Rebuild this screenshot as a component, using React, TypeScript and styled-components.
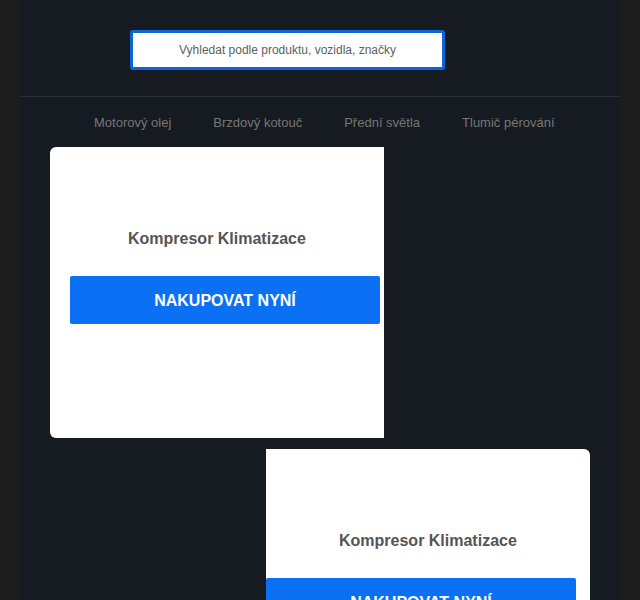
import styled, { createGlobalStyle } from "styled-components"

const Global = createGlobalStyle`
    body{
        margin: 0;
        background-color: #1c1c1d;
        font-family: "Liberation Sans", Arial, sans-serif;
    }
`

const Pagina = styled.div`
    width: 600px;
    min-height: 600px;
    margin: 0 auto;
    background-color: #151b20;
    padding-bottom: 20px;
`
const Cabecalho = styled.header`
    padding: 30px 0 26px 110px;
    border-bottom: 1px solid #272f34;
`
const Busca = styled.input`
    box-sizing: border-box;
    display: block;
    width: 315px;
    height: 40px;
    border: 3px solid #0b67d8;
    border-radius: 3px;
    background: #fff;
    font-family: "Liberation Sans", Arial, sans-serif;
    font-size: 12px;
    text-align: center;
    outline: none;
    &::placeholder{
        color: #5e5e5e;
    }
`
const Menu = styled.nav`
    display: flex;
    gap: 42px;
    height: 50px;
    align-items: center;
    padding-left: 74px;
    a{
        color: #777;
        font-size: 13px;
        text-decoration: none;
    }
`
const Linha = styled.div<{ $inicio: number, $largura: number, $topo: number, $lado: string }>`
    display: flex;
    justify-content: ${({ $lado }) => $lado};
    margin: ${({ $topo }) => $topo}px 0 0 ${({ $inicio }) => $inicio}px;
    width: ${({ $largura }) => $largura}px;
    overflow: hidden;
`
const Cartao = styled.div`
    flex: none;
    box-sizing: border-box;
    width: 344px;
    height: 291px;
    background: #fff;
    border-radius: 6px;
    padding-top: 83px;
`
const Titulo = styled.h3<{ $desloca: number }>`
    margin: 0 0 0 ${({ $desloca }) => $desloca}px;
    font-size: 16px;
    line-height: 18px;
    font-weight: bold;
    color: #555;
`
const Botao = styled.button`
    display: block;
    width: 310px;
    height: 48px;
    margin: 28px 0 0 20px;
    padding: 2px 0 0;
    border: none;
    border-radius: 2px;
    background: #0b70f4;
    color: #fff;
    font-family: "Liberation Sans", Arial, sans-serif;
    font-size: 16px;
    font-weight: bold;
    text-transform: uppercase;
`

const links = ["Motorový olej", "Brzdový kotouč", "Přední světla", "Tlumič pérování"]

const App = () => {
    return (
        <Pagina>
            <Global />
            <Cabecalho>
                <Busca placeholder="Vyhledat podle produktu, vozidla, značky" />
            </Cabecalho>
            <Menu>
                {links.map(item => <a href="#" key={item}>{item}</a>)}
            </Menu>

            <Linha $inicio={30} $largura={334} $topo={0} $lado="flex-start">
                <Cartao>
                    <Titulo $desloca={78}>Kompresor Klimatizace</Titulo>
                    <Botao>Nakupovat nyní</Botao>
                </Cartao>
            </Linha>

            <Linha $inicio={246} $largura={324} $topo={11} $lado="flex-end">
                <Cartao>
                    <Titulo $desloca={93}>Kompresor Klimatizace</Titulo>
                    <Botao>Nakupovat nyní</Botao>
                </Cartao>
            </Linha>
        </Pagina>
    )
}

export default App
